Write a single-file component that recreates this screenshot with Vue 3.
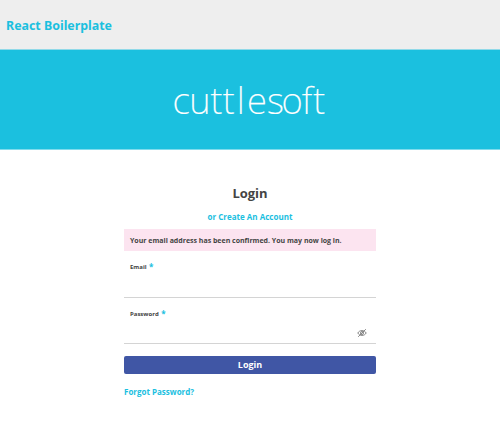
<script setup>
import { ref } from 'vue'

const email = ref('')
const password = ref('')
</script>

<template>
  <div class="page">
    <header class="topbar"><a class="brand">React Boilerplate</a></header>
    <div class="hero">
      <svg class="logo" viewBox="0 0 160 50" role="img">
        <text y="38.7" x="2.6 19.2 40.6 52.7 66.8 77 97 111.4 131.8 143.2">cuttlesoft</text>
      </svg>
    </div>
    <main class="panel">
      <h1 class="title">Login</h1>
      <a class="create">or Create An Account</a>
      <div class="notice">Your email address has been confirmed. You may now log in.</div>
      <form class="form" @submit.prevent>
        <label class="field">
          <span class="label">Email <span class="star">*</span></span>
          <input v-model="email" class="input" type="email" />
        </label>
        <label class="field second">
          <span class="label">Password <span class="star">*</span></span>
          <span class="row">
            <input v-model="password" class="input" type="password" />
            <svg class="eye" viewBox="0 0 10 8" fill="none" stroke="#858585">
              <path d="M.8 4C2.5 .8 7.5 .8 9.2 4C7.5 7.2 2.5 7.2 .8 4Z" />
              <circle cx="5" cy="4" r="1.5" />
              <path d="M1.2 7.8L8.8 .2" />
            </svg>
          </span>
        </label>
        <button class="submit" type="submit">Login</button>
      </form>
      <a class="forgot">Forgot Password?</a>
    </main>
  </div>
</template>

<style>
body {
  background: #fff;
}
</style>

<style scoped>
.page {
  height: 437px;
  overflow: hidden;
  font-family: "Open Sans", "Noto Sans", sans-serif;
  font-weight: 700;
  color: #444;
}
.topbar {
  box-sizing: border-box;
  display: flex;
  align-items: center;
  height: 49px;
  padding: 2px 6px 0;
  background: #eee;
}
.brand {
  color: #1bc0df;
  font-family: "Noto Sans", sans-serif;
  font-size: 12.4px;
  line-height: 18px;
}
.hero {
  box-sizing: border-box;
  display: flex;
  align-items: center;
  justify-content: center;
  height: 101px;
  border-top: 1px solid #90d9e8;
  border-bottom: 1px solid #7fdced;
  background: #1bc0df;
}
.logo {
  width: 160px;
  height: 50px;
  fill: #fff;
  stroke: #fff;
  stroke-width: 0.2px;
  font-family: "Noto Sans", sans-serif;
  font-weight: 200;
  font-size: 36.5px;
}
.panel {
  display: flex;
  flex-direction: column;
  align-items: center;
  width: 252px;
  margin: 0 auto;
  padding-top: 34px;
}
.title {
  margin: 0;
  font-size: 13px;
  line-height: 18px;
}
.create {
  margin-top: 9px;
  color: #1bc0df;
  font-size: 8px;
  line-height: 12px;
}
.notice {
  box-sizing: border-box;
  width: 100%;
  height: 22px;
  margin-top: 6px;
  padding: 0 6px;
  background: #fce4f0;
  font-size: 7px;
  line-height: 23px;
}
.form {
  width: 100%;
}
.field {
  box-sizing: border-box;
  display: flex;
  flex-direction: column;
  height: 47px;
  padding-top: 11px;
  border-bottom: 1px solid #d4d4d4;
}
.second {
  height: 46px;
}
.label {
  padding-left: 6px;
  font-size: 6px;
  line-height: 10px;
}
.star {
  position: relative;
  top: 1px;
  margin-left: 1px;
  color: #1bc0df;
  font-size: 8px;
  line-height: 0;
}
.row {
  display: flex;
  align-items: center;
  padding: 2px 9px 0 0;
}
.input {
  box-sizing: border-box;
  flex: 1;
  min-width: 0;
  height: 24px;
  padding: 0 6px;
  border: 0;
  outline: 0;
  background: transparent;
  font: inherit;
  font-size: 8px;
}
.eye {
  width: 10px;
  height: 8px;
}
.submit {
  display: block;
  width: 100%;
  height: 18px;
  margin-top: 12px;
  padding: 0;
  border: 0;
  border-radius: 2px;
  background: #4056a5;
  color: #fff;
  font: inherit;
  font-size: 9px;
  line-height: 18px;
}
.forgot {
  align-self: flex-start;
  margin-top: 12px;
  color: #1bc0df;
  font-size: 8px;
  line-height: 12px;
}
</style>
